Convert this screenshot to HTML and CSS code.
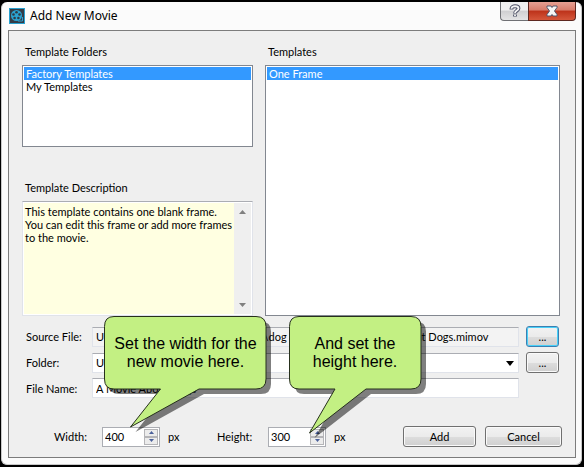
FILE: index.html
```html
<!DOCTYPE html>
<html lang="en">
<head>
<meta charset="utf-8">
<title>Add New Movie</title>
<link rel="stylesheet" href="styles.css">
</head>
<body>
<main class="window">
  <header class="titlebar">
    <svg class="app-icon" viewBox="0 0 16 16" aria-hidden="true">
      <rect x=".5" y=".5" width="15" height="15" fill="#343b46" stroke="#28a0cf"/>
      <circle cx="7.500" cy="7.500" r="5.500" fill="#2aa3d3"/>
      <path d="M9 13h4.500V9" fill="none" stroke="#2aa3d3"/>
      <g fill="#303a46"><circle cx="7.500" cy="4.300" r="1.300"/><circle cx="10.500" cy="6.500" r="1.300"/><circle cx="9.400" cy="10" r="1.300"/><circle cx="5.600" cy="10" r="1.300"/><circle cx="4.500" cy="6.500" r="1.300"/></g>
    </svg>
    <h1 class="title">Add New Movie</h1>
    <div class="caption-buttons">
      <button class="caption help" type="button" aria-label="Help">
        <svg width="12" height="14" viewBox="0 0 12 14" aria-hidden="true"><path d="M2.500 5.500V4.500C2.500 1.500 9.500 1.500 9.500 4.500C9.500 6.500 6 6.500 6 9.500M6 10.500v2" fill="none" stroke="#4d5065" stroke-width="3.800"/><path d="M2.500 4.800V4.500C2.500 1.500 9.500 1.500 9.500 4.500C9.500 6.500 6 6.500 6 9M6 10.500v1.500" fill="none" stroke="#f4f4f4" stroke-width="1.800"/></svg>
      </button>
      <button class="caption close" type="button" aria-label="Close">
        <svg width="14" height="12" viewBox="0 0 14 12" aria-hidden="true"><path d="M2 1h4l1 1.500L8 1h4v1.500L9.500 6l2.500 3.500V11H8L7 9.500L6 11H2V9.500L4.500 6L2 2.500z" fill="#f6f6f6" stroke="#53556b"/></svg>
      </button>
    </div>
  </header>

  <form class="panel">
    <div class="top">
      <div class="column">
        <h2 class="heading">Template Folders</h2>
        <ul class="list folders">
          <li class="item selected">Factory Templates</li>
          <li class="item">My Templates</li>
        </ul>
        <label class="heading second" for="description">Template Description</label>
        <div class="description">
          <textarea id="description" class="description-text" readonly>This template contains one blank frame.
You can edit this frame or add more frames
to the movie.</textarea>
          <div class="scrollbar" aria-hidden="true">
            <svg width="7" height="4" viewBox="0 0 7 4"><path d="M0 4L3.500 0L7 4z" fill="#808080"/></svg>
            <svg width="7" height="4" viewBox="0 0 7 4"><path d="M0 0L3.500 4L7 0z" fill="#808080"/></svg>
          </div>
        </div>
      </div>
      <div class="column">
        <h2 class="heading">Templates</h2>
        <ul class="list templates">
          <li class="item selected">One Frame</li>
        </ul>
      </div>
    </div>

    <div class="fields">
      <label for="source">Source File:</label>
      <input id="source" class="field source" type="text" value="Untitled Project Folder\My Movies\dog movies\Film\A Movie About Dogs.mimov" readonly>
      <button class="button browse focused" type="button" aria-label="Browse source file">...</button>
      <label for="folder">Folder:</label>
      <div class="select-wrap">
        <select id="folder" class="field"><option>Untitled</option></select>
        <svg class="select-arrow" width="8" height="5" viewBox="0 0 8 5" aria-hidden="true"><path d="M0 0h8L4 5z" fill="#000"/></svg>
      </div>
      <button class="button browse" type="button" aria-label="Browse folder">...</button>
      <label for="filename">File Name:</label>
      <input id="filename" class="field" type="text" value="A Movie About Dogs">
    </div>

    <div class="bottom">
      <label class="size-label" for="width">Width:</label>
      <div class="spinner">
        <input id="width" class="spinner-input" type="text" value="400">
        <div class="steps">
          <button class="step" type="button" aria-label="Increase width"><svg width="5" height="3" viewBox="0 0 5 3"><path d="M0 3L2.500 0L5 3z" fill="#4b619b"/></svg></button>
          <button class="step" type="button" aria-label="Decrease width"><svg width="5" height="3" viewBox="0 0 5 3"><path d="M0 0L2.500 3L5 0z" fill="#4b619b"/></svg></button>
        </div>
        <div class="callout callout-width">
          <svg class="bubble" width="170" height="124" viewBox="0 0 170 124" aria-hidden="true">
            <path class="bubble-shadow" transform="translate(5 5)" d="M10 .5H152Q162 .5 162 10.500V63Q162 73 152 73H95L26.500 111L56.500 73H10Q.5 73 .5 63V10.500Q.5 .5 10 .5z"/>
            <path class="bubble-face" d="M10 .5H152Q162 .5 162 10.500V63Q162 73 152 73H95L26.500 111L56.500 73H10Q.5 73 .5 63V10.500Q.5 .5 10 .5z"/>
          </svg>
          <p class="callout-text">Set the width for the<br>new movie here.</p>
        </div>
      </div>
      <span class="unit">px</span>
      <label class="size-label height-label" for="height">Height:</label>
      <div class="spinner">
        <input id="height" class="spinner-input" type="text" value="300">
        <div class="steps">
          <button class="step" type="button" aria-label="Increase height"><svg width="5" height="3" viewBox="0 0 5 3"><path d="M0 3L2.500 0L5 3z" fill="#4b619b"/></svg></button>
          <button class="step" type="button" aria-label="Decrease height"><svg width="5" height="3" viewBox="0 0 5 3"><path d="M0 0L2.500 3L5 0z" fill="#4b619b"/></svg></button>
        </div>
        <div class="callout callout-height">
          <svg class="bubble" width="140" height="124" viewBox="0 0 140 124" aria-hidden="true">
            <path class="bubble-shadow" transform="translate(5 5)" d="M10 .5H122Q132 .5 132 10.500V63Q132 73 122 73H77L20.500 117L46 73H10Q.5 73 .5 63V10.500Q.5 .5 10 .5z"/>
            <path class="bubble-face" d="M10 .5H122Q132 .5 132 10.500V63Q132 73 122 73H77L20.500 117L46 73H10Q.5 73 .5 63V10.500Q.5 .5 10 .5z"/>
          </svg>
          <p class="callout-text">And set the<br>height here.</p>
        </div>
      </div>
      <span class="unit">px</span>
      <div class="actions">
        <button class="button add" type="submit">Add</button>
        <button class="button cancel" type="button">Cancel</button>
      </div>
    </div>
  </form>
</main>
</body>
</html>
```
FILE: styles.css
```css
* { box-sizing: border-box; }

body {
  margin: 0;
  min-height: 100vh;
  padding: 2px 2px 2px 1px;
  display: flex;
  background: #000;
  color: #000;
  font: 11px/13px Lato, "Liberation Sans", Arial, sans-serif;
}

button, input, select, textarea { font: inherit; color: inherit; margin: 0; }
h1, h2, p, ul { margin: 0; padding: 0; font-weight: normal; }
svg { display: block; }

.window {
  flex: 1;
  display: flex;
  flex-direction: column;
  padding: 0 5px 6px 6px;
  border: 1px solid #c8c8c8;
  border-top: 0;
  border-radius: 6px;
  background: #fbfbfb;
}

.titlebar { display: flex; align-items: center; height: 28px; padding-left: 1px; }
.app-icon { width: 16px; height: 16px; }
.title { flex: 1; margin-left: 5px; font: 12px/16px "Noto Sans", sans-serif; }

.caption-buttons { display: flex; align-self: flex-start; }
.caption {
  display: grid;
  place-items: center;
  height: 19px;
  padding: 0;
  border: 1px solid #6f7074;
  border-top: 0;
}
.help { width: 28px; border-right: 0; border-radius: 0 0 0 4px; background: linear-gradient(#f0f0f0 45%, #cfcfd1 50%, #e4e4e5); }
.close { width: 48px; border-color: #5d2720; border-radius: 0 0 4px 0; background: linear-gradient(#e6a093, #d87c6b 45%, #bd321a 50%, #d5573b); }

.panel {
  flex: 1;
  display: flex;
  flex-direction: column;
  padding: 14px 13px 0;
  border: 1px solid #7c7c7c;
  background: #efefef;
}

.top { display: grid; grid-template-columns: 231fr 295fr; gap: 12px; padding-right: 2px; }
.column { display: flex; flex-direction: column; }
.heading { height: 20px; padding-left: 3px; font-size: 11px; }
.second { margin-top: 34px; }

.list { list-style: none; padding: 1px; border: 1px solid #828790; background: #fff; }
.folders { height: 82px; }
.templates { flex: 1; }
.item { padding-left: 2px; }
.selected { background: #3399ff; color: #fff; }

.description {
  display: flex;
  height: 115px;
  padding: 1px;
  border: 1px solid #e0e3ea;
  border-top-color: #abadb3;
  background: #fff;
}
.description-text {
  flex: 1;
  min-width: 0;
  padding: 2px 0 0 1px;
  border: 0;
  resize: none;
  overflow: hidden;
  white-space: pre;
  background: #ffffe1;
}
.scrollbar {
  display: flex;
  flex-direction: column;
  justify-content: space-between;
  align-items: center;
  width: 17px;
  padding: 7px 0;
  background: #efefef;
}

.fields {
  display: grid;
  grid-template-columns: 59px 1fr 33px;
  column-gap: 7px;
  row-gap: 5px;
  align-items: center;
  margin-top: 10px;
  padding: 0 3px 0 4px;
}
.field {
  width: 100%;
  height: 20px;
  padding: 0 3px;
  border: 1px solid #e0e3ea;
  border-top-color: #abadb3;
  background: #fff;
}
.source { background: #f3f3f3; }
.select-wrap { position: relative; height: 20px; }
select.field { appearance: none; display: block; }
.select-arrow { position: absolute; right: 5px; top: 8px; pointer-events: none; }

.button {
  height: 21px;
  padding: 0;
  border: 1px solid #707070;
  border-radius: 3px;
  background: linear-gradient(#f2f2f2, #ebebeb 50%, #dddddd 51%, #cfcfcf);
  box-shadow: inset 0 0 0 1px #fafafa;
}
.focused { border-color: #3c7fb1; box-shadow: inset 0 0 0 1px #48d0f8; }

.bottom { display: flex; align-items: center; margin-top: 28px; padding-left: 32px; }
.size-label { width: 48px; }
.height-label { width: 51px; margin-left: 37px; }
.unit { width: 12px; margin-left: 8px; }
.spinner {
  position: relative;
  display: flex;
  width: 58px;
  height: 20px;
  padding: 1px;
  border: 1px solid #abadb3;
  background: #fff;
}
.spinner-input { flex: 1; min-width: 0; padding: 0 1px; border: 0; background: none; }
.steps { display: grid; grid-template-rows: 1fr 1fr; width: 14px; }
.step {
  display: grid;
  place-items: center;
  padding: 0;
  border: 1px solid #b5b5b8;
  background: #ececec;
}
.actions { display: flex; gap: 9px; margin-left: auto; }
.add { width: 73px; }
.cancel { width: 77px; }

.callout { position: absolute; z-index: 2; pointer-events: none; font-family: "Liberation Sans", Arial, sans-serif; }
.callout-width { left: 1px; bottom: 7px; width: 163px; height: 123px; }
.callout-height { left: 20px; bottom: 7px; width: 132px; height: 123px; }
.bubble { position: absolute; inset: 0 auto auto 0; }
.bubble-face { fill: #c3f083; stroke: #26301c; }
.bubble-shadow { fill: #000; fill-opacity: .5; }
.callout-text {
  position: relative;
  padding-top: 19px;
  text-align: center;
  font-size: 16px;
  line-height: 18px;
  white-space: nowrap;
}
```
